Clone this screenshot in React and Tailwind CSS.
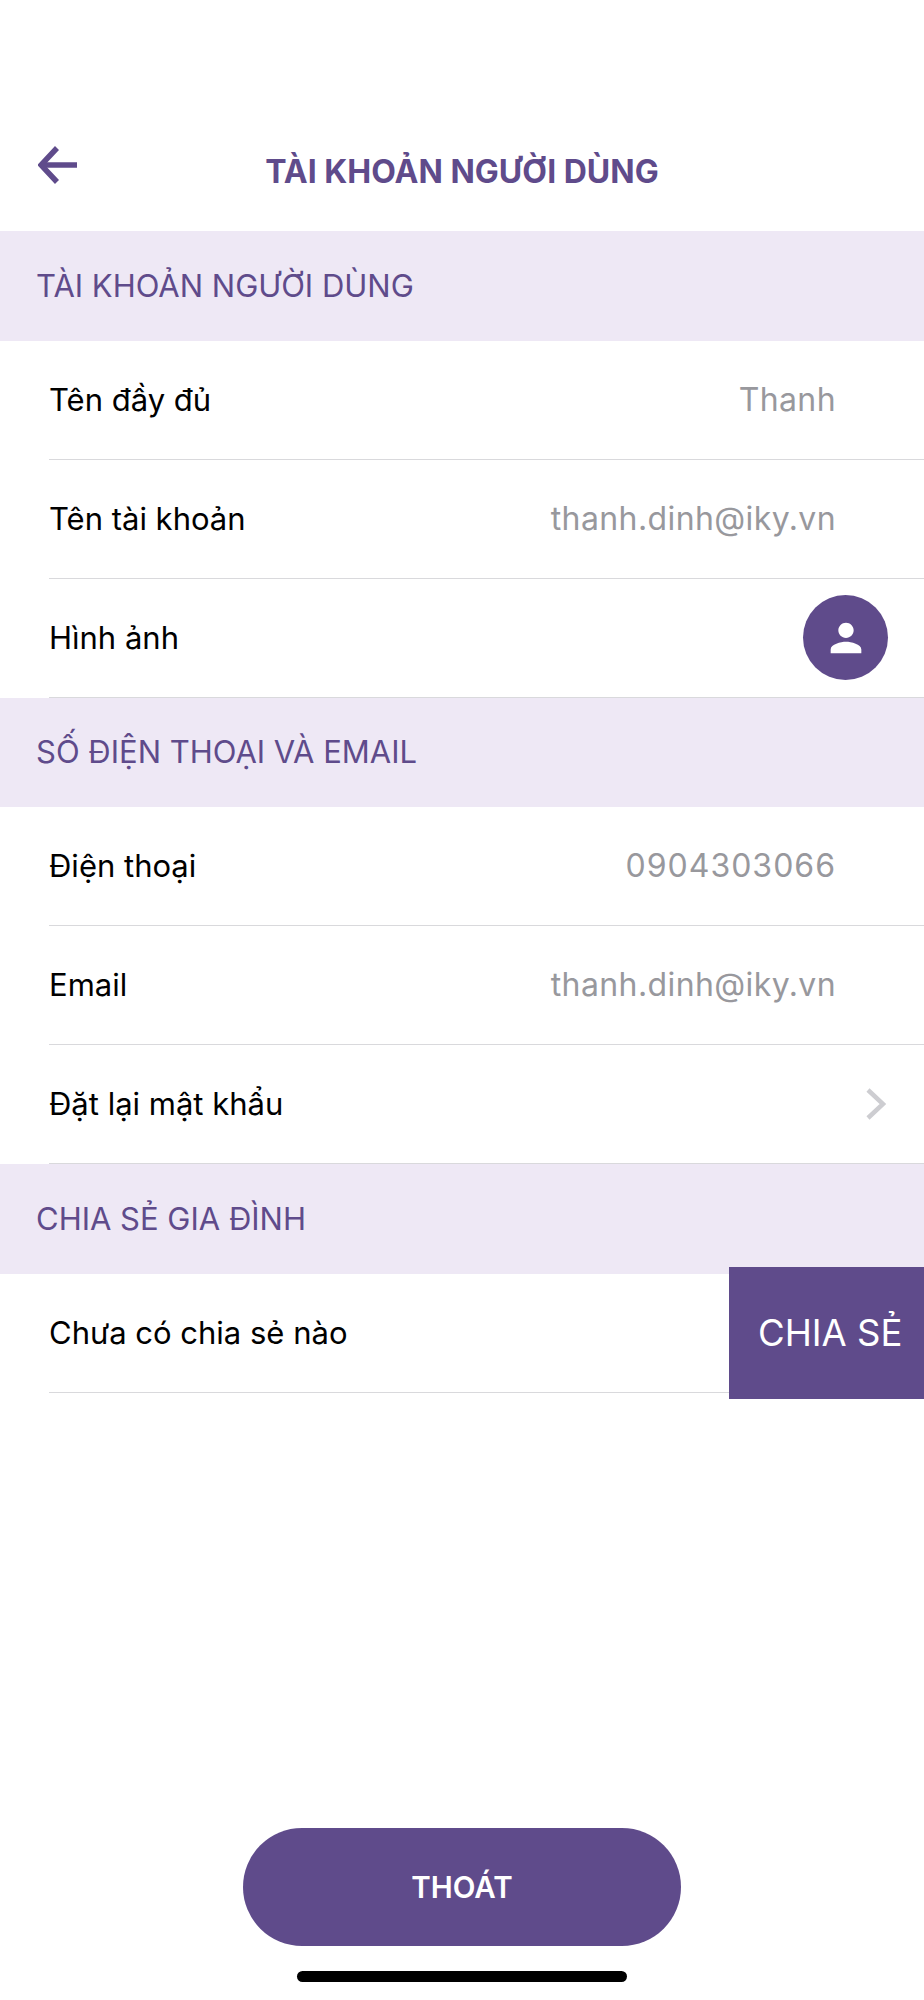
const PURPLE = 'text-[#5f4b8b]'

function SectionHeader({ title, tall }) {
  return (
    <div className={`flex items-center bg-[#eee8f5] pl-[36px] ${tall ? 'h-[110px]' : 'h-[109px]'}`}>
      <span className={`text-[31px] ${PURPLE}`}>{title}</span>
    </div>
  )
}

function Row({ label, children }) {
  return (
    <div className="pl-[49px]">
      <div className="flex h-[119px] items-center justify-between border-b border-[#d9d9dc]">
        <span className="text-[31px] text-black">{label}</span>
        {children}
      </div>
    </div>
  )
}

function Value({ children, wide }) {
  return (
    <span className={`pr-[88px] text-[32px] text-[#98989d] ${wide ? 'tracking-[1px]' : 'tracking-[0.4px]'}`}>
      {children}
    </span>
  )
}

export default function App() {
  return (
    <div className="relative flex h-[2000px] flex-col bg-white font-['Inter',sans-serif]">
      {/* Nav bar */}
      <div className="relative flex h-[231px] items-start justify-center pt-[148px]">
        <button className="absolute left-[38px] top-[146px]">
          <svg width="39" height="38" viewBox="0 0 39 38" fill="none" stroke="#5f4b8b" strokeWidth="5.5">
            <path d="M19 2 3 19l16 17" />
            <path d="M3 19h36" />
          </svg>
        </button>
        <h1 className={`text-[32px] font-bold ${PURPLE}`}>TÀI KHOẢN NGƯỜI DÙNG</h1>
      </div>

      <SectionHeader tall title="TÀI KHOẢN NGƯỜI DÙNG" />
      <Row label="Tên đầy đủ"><Value>Thanh</Value></Row>
      <Row label="Tên tài khoản"><Value>thanh.dinh@iky.vn</Value></Row>
      <Row label="Hình ảnh">
        <div className="mr-[36px] -mt-px flex h-[85px] w-[85px] items-center justify-center rounded-full bg-[#5f4b8b]">
          <svg width="46" height="46" viewBox="0 0 24 24" fill="white">
            <path d="M12 12c2.21 0 4-1.79 4-4s-1.79-4-4-4-4 1.79-4 4 1.79 4 4 4zm0 2c-2.67 0-8 1.34-8 4v2h16v-2c0-2.66-5.33-4-8-4z" />
          </svg>
        </div>
      </Row>

      <SectionHeader title="SỐ ĐIỆN THOẠI VÀ EMAIL" />
      <Row label="Điện thoại"><Value wide>0904303066</Value></Row>
      <Row label="Email"><Value>thanh.dinh@iky.vn</Value></Row>
      <Row label="Đặt lại mật khẩu">
        <svg className="mr-[38px]" width="20" height="32" viewBox="0 0 20 32" fill="none" stroke="#cdcdd1" strokeWidth="4.5">
          <path d="M2 2l15 14L2 30" />
        </svg>
      </Row>

      <SectionHeader tall title="CHIA SẺ GIA ĐÌNH" />
      <div className="relative">
        <Row label="Chưa có chia sẻ nào" />
        <button className="absolute right-0 top-[-7px] flex h-[132px] w-[195px] items-center pl-[29px] bg-[#5f4b8b] text-[36.5px] text-white">
          CHIA SẺ
        </button>
      </div>

      {/* Sign out + home indicator */}
      <div className="mt-auto flex flex-col items-center">
        <button className="h-[118px] w-[438px] rounded-[59px] bg-[#5f4b8b] text-[29.5px] font-semibold text-white">
          THOÁT
        </button>
        <div className="mb-[18px] mt-[25px] h-[11px] w-[330px] rounded-full bg-black" />
      </div>
    </div>
  )
}
